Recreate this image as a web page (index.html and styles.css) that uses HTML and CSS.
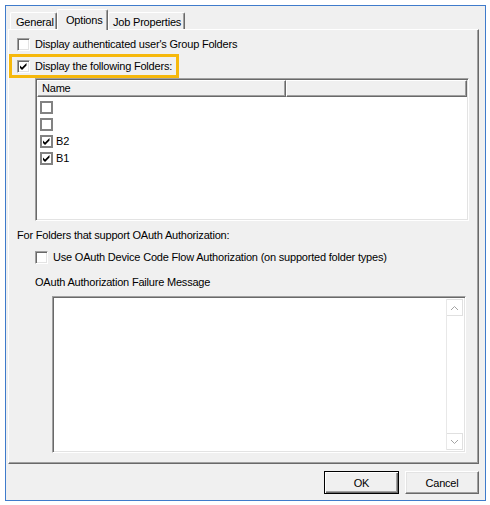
FILE: index.html
```html
<!DOCTYPE html>
<html>
<head>
<meta charset="utf-8">
<link rel="stylesheet" href="styles.css">
</head>
<body>
<div class="window">
  <div class="tabs">
    <div class="tab tab-general">General</div>
    <div class="tab tab-selected">Options</div>
    <div class="tab tab-job">Job Properties</div>
  </div>
  <div class="panel">
    <div class="check-row">
      <span class="cb"></span>
      <span class="lbl">Display authenticated user's Group Folders</span>
    </div>
    <div class="check-row row-gap highlight">
      <span class="cb"><svg width="9" height="9" viewBox="0 0 9 9"><path d="M1 3.5 L3 5.5 L7.5 1 L7.5 3.5 L3 8 L1 6 Z" fill="#000"/></svg></span>
      <span class="lbl">Display the following Folders:</span>
    </div>
    <div class="listview">
      <div class="lv-header">
        <div class="lv-col lv-col-name">Name</div>
        <div class="lv-col lv-col-rest"></div>
      </div>
      <div class="lv-body">
        <div class="lv-row"><span class="lcb"></span></div>
        <div class="lv-row"><span class="lcb"></span></div>
        <div class="lv-row"><span class="lcb"><svg width="9" height="9" viewBox="0 0 9 9"><path d="M1 3.5 L3 5.5 L7.5 1 L7.5 3.5 L3 8 L1 6 Z" fill="#000"/></svg></span><span class="lv-text">B2</span></div>
        <div class="lv-row"><span class="lcb"><svg width="9" height="9" viewBox="0 0 9 9"><path d="M1 3.5 L3 5.5 L7.5 1 L7.5 3.5 L3 8 L1 6 Z" fill="#000"/></svg></span><span class="lv-text">B1</span></div>
      </div>
    </div>
    <div class="section-label">For Folders that support OAuth Authorization:</div>
    <div class="check-row indent oauth-row">
      <span class="cb"></span>
      <span class="lbl">Use OAuth Device Code Flow Authorization (on supported folder types)</span>
    </div>
    <div class="section-label indent fail-label">OAuth Authorization Failure Message</div>
    <div class="textarea">
      <div class="ta-content"></div>
      <div class="scrollbar">
        <div class="sb-btn"><svg width="9" height="6" viewBox="0 0 9 6"><path d="M1 5 L4.5 1.5 L8 5" fill="none" stroke="#a3a3a3" stroke-width="1"/></svg></div>
        <div class="sb-track"></div>
        <div class="sb-btn"><svg width="9" height="6" viewBox="0 0 9 6"><path d="M1 1 L4.5 4.5 L8 1" fill="none" stroke="#a3a3a3" stroke-width="1"/></svg></div>
      </div>
    </div>
  </div>
  <div class="buttons">
    <div class="btn btn-default"><span>OK</span></div>
    <div class="btn btn-cancel"><span>Cancel</span></div>
  </div>
</div>
</body>
</html>
```
FILE: styles.css
```css
html, body {
  margin: 0;
  padding: 0;
  background: #ffffff;
}
body {
  font-family: "Liberation Sans", Arial, sans-serif;
  font-size: 11px;
  letter-spacing: -0.2px;
  color: #000;
}
.window {
  margin: 5px 0 0 5px;
  width: 481px;
  height: 496px;
  box-sizing: border-box;
  border: 1px solid #3f7bcb;
  background: #f0f0f0;
  padding: 3px 6px 0 2px;
}
.tabs {
  display: flex;
  align-items: flex-end;
  height: 20px;
  padding-left: 2px;
  position: relative;
  z-index: 2;
}
.tab {
  box-sizing: border-box;
  height: 17px;
  border-top: 1px solid #fff;
  border-left: 1px solid #fff;
  border-right: 1px solid #696969;
  box-shadow: inset -1px 0 #a0a0a0;
  border-radius: 2px 2px 0 0;
  display: flex;
  align-items: center;
  padding-left: 4px;
  padding-top: 1px;
  background: #f0f0f0;
  white-space: nowrap;
}
.tab-general { width: 47px; padding-left: 5px; }
.tab-selected {
  width: 51px;
  height: 21px;
  margin-bottom: -1px;
  padding-left: 8px;
  padding-bottom: 2px;
}
.tab-job { width: 77px; padding-left: 4px; }
.panel {
  box-sizing: border-box;
  height: 435px;
  width: 471px;
  border-top: 1px solid #fff;
  border-left: 1px solid #fff;
  border-right: 1px solid #696969;
  border-bottom: 1px solid #696969;
  box-shadow: inset -1px -1px #a0a0a0;
  padding: 8px 0 0 8px;
  display: flex;
  flex-direction: column;
  align-items: flex-start;
}
.check-row {
  display: flex;
  align-items: center;
  height: 13px;
  gap: 5px;
  position: relative;
  white-space: nowrap;
}
.row-gap { margin-top: 9px; }
.highlight::after {
  content: "";
  position: absolute;
  left: -8px;
  top: -6px;
  width: 170px;
  height: 24px;
  box-sizing: border-box;
  border: 3px solid #f6b80b;
}
.cb {
  width: 13px;
  height: 13px;
  box-sizing: border-box;
  background: #fff;
  border: 1px solid;
  border-color: #a0a0a0 #fff #fff #a0a0a0;
  box-shadow: inset 1px 1px #696969, inset -1px -1px #e3e3e3;
  display: flex;
  align-items: center;
  justify-content: center;
  flex: none;
}
.cb svg { display: block; }
.lbl { line-height: 13px; }
.listview {
  margin-top: 5px;
  margin-left: 18px;
  width: 434px;
  height: 143px;
  box-sizing: border-box;
  background: #fff;
  border: 1px solid;
  border-color: #a0a0a0 #fff #fff #a0a0a0;
  box-shadow: inset 1px 1px #696969, inset -1px -1px #e3e3e3;
  padding: 1px;
  display: flex;
  flex-direction: column;
}
.lv-header {
  display: flex;
  height: 17px;
  flex: none;
}
.lv-col {
  box-sizing: border-box;
  height: 17px;
  background: #f0f0f0;
  border-top: 1px solid #fff;
  border-left: 1px solid #fff;
  border-right: 1px solid #696969;
  border-bottom: 1px solid #696969;
  box-shadow: inset -1px -1px #a0a0a0;
  display: flex;
  align-items: center;
  padding-left: 4px;
  padding-bottom: 1px;
}
.lv-col-name { width: 249px; }
.lv-col-rest { flex: 1; }
.lv-body {
  padding: 2px 0 0 3px;
}
.lv-row {
  height: 17px;
  display: flex;
  align-items: center;
  gap: 3px;
}
.lcb {
  width: 13px;
  height: 13px;
  box-sizing: border-box;
  border: 2px solid #828282;
  background: #fff;
  display: flex;
  align-items: center;
  justify-content: center;
}
.lcb svg { display: block; }
.lv-text { line-height: 13px; }
.section-label {
  margin-top: 8px;
  line-height: 13px;
  height: 13px;
  white-space: nowrap;
}
.indent { margin-left: 18px; }
.oauth-row { margin-top: 9px; }
.fail-label { margin-top: 12px; }
.textarea {
  margin-top: 7px;
  margin-left: 35px;
  width: 414px;
  height: 157px;
  box-sizing: border-box;
  background: #fff;
  border: 1px solid;
  border-color: #a0a0a0 #fff #fff #a0a0a0;
  box-shadow: inset 1px 1px #696969, inset -1px -1px #e3e3e3;
  padding: 2px 2px 2px 2px;
  display: flex;
}
.ta-content { flex: 1; }
.scrollbar {
  width: 17px;
  display: flex;
  flex-direction: column;
  background: #fff;
  border-left: 1px solid #e8e8e8;
  box-sizing: border-box;
}
.sb-btn {
  height: 17px;
  box-sizing: border-box;
  border: 1px solid #e0e0e0;
  border-left: none;
  display: flex;
  align-items: center;
  justify-content: center;
  background: #fff;
}
.sb-track { flex: 1; }
.buttons {
  display: flex;
  justify-content: flex-end;
  gap: 6px;
  margin-top: 7px;
  width: 471px;
}
.btn {
  box-sizing: border-box;
  height: 23px;
  background: #f0f0f0;
  border-top: 1px solid #fff;
  border-left: 1px solid #fff;
  border-right: 1px solid #696969;
  border-bottom: 1px solid #696969;
  box-shadow: inset -1px -1px #a0a0a0, inset 1px 1px #e3e3e3;
  display: flex;
  align-items: center;
  justify-content: center;
}
.btn-default {
  width: 75px;
  border: 1px solid #000;
  box-shadow: inset 1px 1px #fff, inset -1px -1px #696969, inset -2px -2px #a0a0a0;
}
.btn-cancel { width: 74px; }
```
